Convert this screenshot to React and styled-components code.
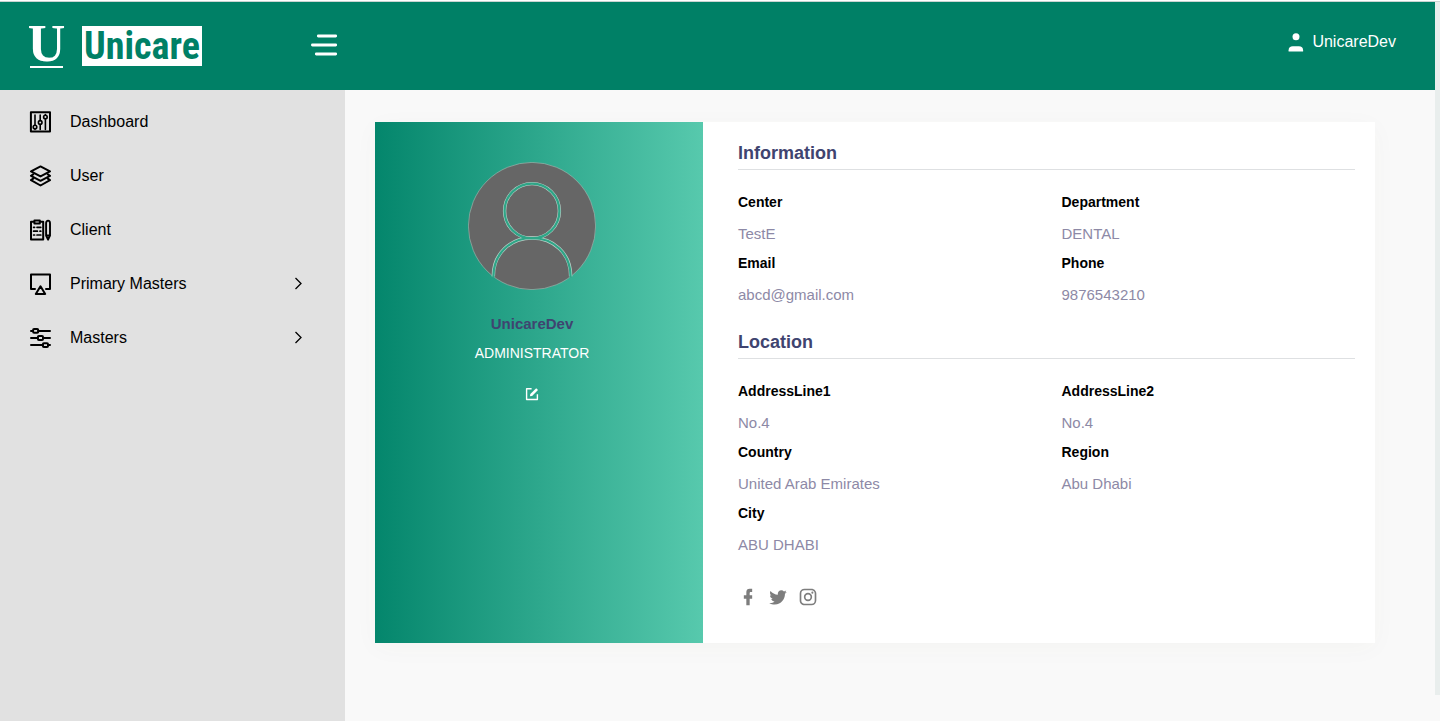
import React from "react";
import styled, { createGlobalStyle } from "styled-components";

const GlobalStyle = createGlobalStyle`
  *, *::before, *::after { box-sizing: border-box; }
  body {
    margin: 0;
    background: #f9f9f9;
    color: #000;
    font-family: "Liberation Sans", Arial, Helvetica, sans-serif;
    font-size: 16px;
    line-height: 20px;
  }
  h1, h2, dl, dd, ul, p { margin: 0; padding: 0; }
`;

const Page = styled.div`
  display: flex;
  min-height: 100vh;
  border-top: 1px solid #fff;
`;

const Shell = styled.div`
  flex: 1;
  min-width: 0;
  display: flex;
  flex-direction: column;
  border-top: 1px solid #c9d3d1;
`;

const ScrollTrack = styled.div`
  width: 5px;
  height: calc(100vh - 27px);
  background: #e9eeed;
  border-top: 1px solid #d0d4d4;
`;

const Header = styled.header`
  display: flex;
  align-items: center;
  height: 88px;
  background: #008066;
  color: #fff;
`;

const Brand = styled.a`
  display: flex;
  align-items: center;
  gap: 19px;
  width: 311px;
  padding-left: 30px;
  color: #fff;
  text-decoration: none;
`;

const BrandLetter = styled.span`
  width: 33px;
  height: 44px;
  display: flex;
  justify-content: center;
  border-bottom: 2px solid #fff;
  font-family: "Liberation Serif", "Times New Roman", serif;
  font-size: 52px;
  font-weight: 700;
  line-height: 40px;
`;

const BrandName = styled.span`
  width: 120px;
  height: 40px;
  background: #fff;
  color: #008066;
  font-family: "Roboto Condensed", "Liberation Sans Narrow", "Liberation Sans", sans-serif;
  font-size: 38px;
  font-weight: 700;
  line-height: 40px;
  text-align: center;
`;

const IconButton = styled.button`
  display: flex;
  padding: 0;
  border: 0;
  background: none;
  color: #fff;
  cursor: pointer;
`;

const Account = styled.a`
  display: flex;
  align-items: center;
  gap: 8px;
  margin: 0 39px 8px auto;
  color: #fff;
  text-decoration: none;
`;

const Body = styled.div`
  flex: 1;
  display: flex;
`;

const Sidebar = styled.nav`
  flex: none;
  width: 345px;
  padding-top: 5px;
  background: #e1e1e1;
`;

const NavList = styled.ul`
  list-style: none;
`;

const NavLink = styled.a`
  display: flex;
  align-items: center;
  gap: 19px;
  height: 54px;
  padding: 0 42px 0 29px;
  color: #000;
  text-decoration: none;
`;

const NavLabel = styled.span`
  flex: 1;
`;

const Main = styled.main`
  flex: 1;
  min-width: 0;
  padding: 32px 60px 32px 30px;
`;

const Card = styled.section`
  display: flex;
  background: #fff;
  box-shadow: 0 5px 24px rgba(105, 82, 20, 0.03);
`;

const Profile = styled.div`
  flex: 0 0 328px;
  display: flex;
  flex-direction: column;
  align-items: center;
  padding: 40px 14px 0 0;
  background: linear-gradient(to right, #04866c, #57c9ad);
  color: #fff;
`;

const ProfileName = styled.h1`
  margin-top: 24px;
  color: #3f4470;
  font-size: 15px;
  font-weight: 700;
  line-height: 20px;
`;

const Role = styled.p`
  margin: 9px 0 24px;
  font-size: 14px;
`;

const Details = styled.div`
  flex: 1;
  min-width: 0;
  padding: 18px 20px 36px 35px;
`;

const SectionTitle = styled.h2`
  margin-bottom: 22px;
  padding-bottom: 3px;
  border-bottom: 1px solid #dee0e2;
  color: #3f4470;
  font-size: 18px;
  font-weight: 700;
  line-height: 26px;
`;

const Fields = styled.dl`
  display: grid;
  grid-template-columns: 1fr 1fr;
  column-gap: 30px;
  margin-bottom: ${({ $space }) => $space};
`;

const Label = styled.dt`
  margin-bottom: 12px;
  font-size: 14px;
  font-weight: 700;
`;

const Value = styled.dd`
  margin-bottom: 9px;
  color: #8d89a6;
  font-size: 15px;
`;

const Social = styled.div`
  display: flex;
  gap: 10px;
`;

const SocialLink = styled.a`
  display: flex;
  color: #7d7d7d;
`;

const strokes = {
  fill: "none",
  stroke: "currentColor",
  strokeWidth: 2,
  strokeLinecap: "round",
  strokeLinejoin: "round",
};

const DashboardIcon = () => (
  <svg width="22" height="22" viewBox="0 0 22 22" {...strokes} strokeWidth="1.6">
    <rect x="1.9" y="1.2" width="19.1" height="19.3" strokeWidth="2" />
    <path d="M6 4v10.2M6 18v.4M11.2 4v5.5M11.2 13.5v5M16.4 8.5v10M16.4 3.6v.3" />
    <circle cx="6" cy="16" r="1.8" />
    <circle cx="11.2" cy="11.4" r="1.8" />
    <circle cx="16.4" cy="6" r="1.8" />
  </svg>
);

const LayersIcon = () => (
  <svg width="22" height="22" viewBox="0 0 22 22" {...strokes} strokeWidth="2">
    <path d="M11.5 1.4 21 6.4l-9.5 5-9.5-5Z" />
    <path d="M4.2 9.3 2 10.8l9.5 5 9.5-5-2.2-1.5" />
    <path d="M4.2 13.6 2 15.1l9.5 5.4 9.5-5.4-2.2-1.5" />
  </svg>
);

const ClipboardIcon = () => (
  <svg width="22" height="22" viewBox="0 0 22 22" {...strokes} strokeWidth="2">
    <path d="M5 2.8H2v17.8h12.2V2.8h-3M5.4 1.4h5.4v3H5.4Z" />
    <path d="M4.6 8.3h1M8 8.3h3.8M4.6 12.2h3.8M11 12.2h.8M4.6 16h1M8 16h3.8" strokeWidth="1.7" />
    <path d="M17.1 4.2c0-3.4 3.9-3.4 3.9 0v12.5l-1.95 4-1.95-4ZM17.1 16.5H21" strokeWidth="1.9" />
  </svg>
);

const AirplayIcon = () => (
  <svg width="22" height="22" viewBox="0 0 22 22" {...strokes}>
    <path d="M6 16H2V1.5h19V16h-4" />
    <path d="m11.5 13.3 4.7 7.7H6.8Z" />
  </svg>
);

const SlidersIcon = () => (
  <svg width="22" height="22" viewBox="0 0 22 22" {...strokes}>
    <path d="M2 3.9h2.1M9.2 3.9H21M2 11h6.8M14 11h7M2 18.1h11.8M19 18.1h2" />
    <rect x="4.1" y="2" width="5.1" height="3.8" rx="1" />
    <rect x="8.9" y="9.1" width="5.1" height="3.8" rx="1" />
    <rect x="13.9" y="16.2" width="5.1" height="3.8" rx="1" />
  </svg>
);

const ChevronIcon = () => (
  <svg width="9" height="14" viewBox="0 0 9 14" {...strokes} strokeWidth="1.3" strokeLinecap="butt" strokeLinejoin="miter">
    <path d="m1.5 1 5.5 5.5L1.5 12" />
  </svg>
);

const MenuIcon = () => (
  <svg width="27" height="24" viewBox="0 0 27 24" {...strokes} strokeWidth="2.8">
    <path d="M7.3 2h17.4M1.4 11h23.3M5.3 20h19.4" />
  </svg>
);

const PersonIcon = () => (
  <svg width="16" height="20" viewBox="0 0 16 20" fill="currentColor">
    <circle cx="8" cy="4.8" r="3.5" />
    <path d="M.6 19.5v-1.3c0-2.6 1.6-4 4.2-4h6.1c2.6 0 4.2 1.4 4.2 4v1.3Z" />
  </svg>
);

const AvatarIcon = () => (
  <svg width="128" height="128" viewBox="0 0 128 128" role="img" aria-label="Profile picture">
    <circle cx="64" cy="64" r="63.6" fill="#666" stroke="#a5bdb6" strokeWidth="0.6" />
    <g fill="none" stroke="#b9d2ca" strokeWidth="3.4">
      <circle cx="64" cy="49" r="27.4" />
      <path d="M25.4 114.5C25 91 43 76 64 76s39 15 38.6 38.5" />
    </g>
    <g fill="none" stroke="#2fa587" strokeWidth="2.2">
      <circle cx="64" cy="49" r="27.4" />
      <path d="M25.4 115.5C25 91 43 76 64 76s39 15 38.6 39.5" />
    </g>
  </svg>
);

const EditIcon = () => (
  <svg width="14" height="14" viewBox="0 0 14 14" {...strokes} strokeWidth="1.4">
    <path d="M6.6 1.7H1.6v10.8h10.8V7.2" strokeLinecap="butt" />
    <path d="m4.9 9.3.4-2.2 5.9-5.9 1.8 1.8-5.9 5.9Z" fill="currentColor" stroke="none" />
  </svg>
);

const socialPaths = {
  Facebook:
    "M17,2V6H15C14.31,6 14,6.81 14,7.5V10H17V14H14V22H10V14H7V10H10V6A4,4 0 0,1 14,2H17Z",
  Twitter:
    "M22.46,6C21.69,6.35 20.86,6.58 20,6.69C20.88,6.16 21.56,5.32 21.88,4.31C21.05,4.81 20.13,5.16 19.16,5.36C18.37,4.5 17.26,4 16,4C13.65,4 11.73,5.92 11.73,8.29C11.73,8.63 11.77,8.96 11.84,9.27C8.28,9.09 5.11,7.38 3,4.79C2.63,5.42 2.42,6.16 2.42,6.94C2.42,8.43 3.17,9.75 4.33,10.5C3.62,10.5 2.96,10.3 2.38,10C2.38,10 2.38,10 2.38,10.03C2.38,12.11 3.86,13.85 5.82,14.24C5.46,14.34 5.08,14.39 4.69,14.39C4.42,14.39 4.15,14.36 3.89,14.31C4.43,16 6,17.26 7.89,17.29C6.43,18.45 4.58,19.13 2.56,19.13C2.22,19.13 1.88,19.11 1.54,19.07C3.44,20.29 5.7,21 8.12,21C16,21 20.33,14.46 20.33,8.79C20.33,8.6 20.33,8.42 20.32,8.23C21.16,7.63 21.88,6.87 22.46,6Z",
  Instagram:
    "M7.8,2H16.2C19.4,2 22,4.6 22,7.8V16.2A5.8,5.8 0 0,1 16.2,22H7.8C4.6,22 2,19.4 2,16.2V7.8A5.8,5.8 0 0,1 7.8,2M7.6,4A3.6,3.6 0 0,0 4,7.6V16.4C4,18.39 5.61,20 7.6,20H16.4A3.6,3.6 0 0,0 20,16.4V7.6C20,5.61 18.39,4 16.4,4H7.6M17.25,5.5A1.25,1.25 0 0,1 18.5,6.75A1.25,1.25 0 0,1 17.25,8A1.25,1.25 0 0,1 16,6.75A1.25,1.25 0 0,1 17.25,5.5M12,7A5,5 0 0,1 17,12A5,5 0 0,1 12,17A5,5 0 0,1 7,12A5,5 0 0,1 12,7M12,9A3,3 0 0,0 9,12A3,3 0 0,0 12,15A3,3 0 0,0 15,12A3,3 0 0,0 12,9Z",
};

const navItems = [
  { label: "Dashboard", Icon: DashboardIcon },
  { label: "User", Icon: LayersIcon },
  { label: "Client", Icon: ClipboardIcon },
  { label: "Primary Masters", Icon: AirplayIcon, nested: true },
  { label: "Masters", Icon: SlidersIcon, nested: true },
];

const information = [
  ["Center", "TestE"],
  ["Department", "DENTAL"],
  ["Email", "abcd@gmail.com"],
  ["Phone", "9876543210"],
];

const location = [
  ["AddressLine1", "No.4"],
  ["AddressLine2", "No.4"],
  ["Country", "United Arab Emirates"],
  ["Region", "Abu Dhabi"],
  ["City", "ABU DHABI"],
];

function FieldGroup({ title, fields, space }) {
  return (
    <>
      <SectionTitle>{title}</SectionTitle>
      <Fields $space={space}>
        {fields.map(([label, value]) => (
          <div key={label}>
            <Label>{label}</Label>
            <Value>{value}</Value>
          </div>
        ))}
      </Fields>
    </>
  );
}

export default function App() {
  return (
    <Page>
      <GlobalStyle />
      <Shell>
        <Header>
          <Brand href="#">
            <BrandLetter>U</BrandLetter>
            <BrandName>Unicare</BrandName>
          </Brand>
          <IconButton type="button" aria-label="Toggle menu">
            <MenuIcon />
          </IconButton>
          <Account href="#">
            <PersonIcon />
            UnicareDev
          </Account>
        </Header>
        <Body>
          <Sidebar>
            <NavList>
              {navItems.map(({ label, Icon, nested }) => (
                <li key={label}>
                  <NavLink href="#">
                    <Icon />
                    <NavLabel>{label}</NavLabel>
                    {nested && <ChevronIcon />}
                  </NavLink>
                </li>
              ))}
            </NavList>
          </Sidebar>
          <Main>
            <Card>
              <Profile>
                <AvatarIcon />
                <ProfileName>UnicareDev</ProfileName>
                <Role>ADMINISTRATOR</Role>
                <IconButton type="button" aria-label="Edit profile">
                  <EditIcon />
                </IconButton>
              </Profile>
              <Details>
                <FieldGroup title="Information" fields={information} space="15px" />
                <FieldGroup title="Location" fields={location} space="23px" />
                <Social>
                  {Object.entries(socialPaths).map(([name, path]) => (
                    <SocialLink key={name} href="#" aria-label={name}>
                      <svg width="20" height="20" viewBox="0 0 24 24" fill="currentColor">
                        <path d={path} />
                      </svg>
                    </SocialLink>
                  ))}
                </Social>
              </Details>
            </Card>
          </Main>
        </Body>
      </Shell>
      <ScrollTrack />
    </Page>
  );
}
